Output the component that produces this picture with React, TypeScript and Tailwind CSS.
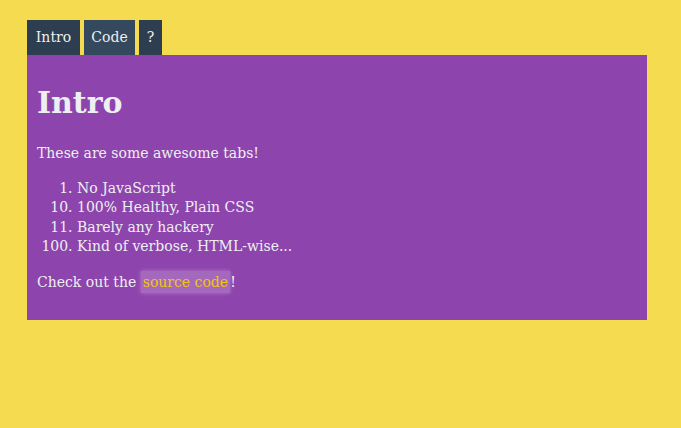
export default function App() {
  const serif = { fontFamily: '"DejaVu Serif", serif' };
  return (
    <div className="min-h-[428px] w-full bg-[#f4db4f] px-[27px] pt-[20px]" style={serif}>
      <div className="w-[620px]">
        <div className="flex gap-[4px] text-[14px] text-[#ecf0f1]">
          <div className="flex h-[35px] w-[53px] items-center justify-center bg-[#2c3e50]">Intro</div>
          <div className="flex h-[35px] w-[51px] items-center justify-center bg-[#34495e]">Code</div>
          <div className="flex h-[35px] w-[23px] items-center justify-center bg-[#2c3e50]">?</div>
        </div>
        <div className="bg-[#8e44ad] px-[10px] pb-[28px] pt-[30px] text-[14px] leading-[19.5px] text-[#ecf0f1]">
          <h1 className="text-[30px] font-bold leading-[36px]">Intro</h1>
          <p className="mt-[23px]">These are some awesome tabs!</p>
          <ol className="mt-[15px] list-decimal pl-[40px]">
            <li value={1}>No JavaScript</li>
            <li value={10}>100% Healthy, Plain CSS</li>
            <li value={11}>Barely any hackery</li>
            <li value={100}>Kind of verbose, HTML-wise...</li>
          </ol>
          <p className="mt-[16px]">
            Check out the{" "}
            <a className="bg-white/20 px-[2px] py-[3px] text-[#f1c40f] shadow-[0_0_4px_rgba(255,255,255,0.3)]">source code</a>!
          </p>
        </div>
      </div>
    </div>
  );
}
